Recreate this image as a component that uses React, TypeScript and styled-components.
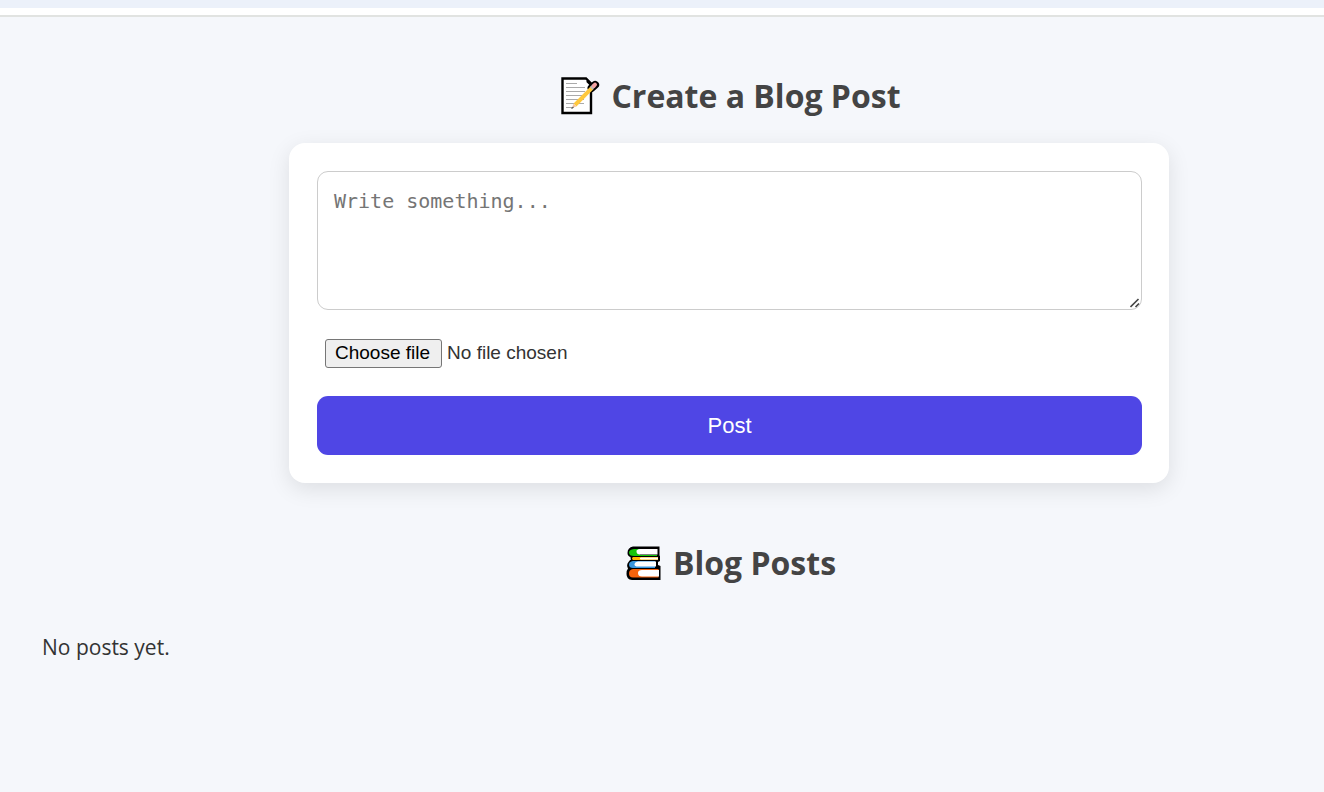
import React, { useState } from 'react';
import styled, { createGlobalStyle } from 'styled-components';

const GlobalStyle = createGlobalStyle`
  *, *::before, *::after { box-sizing: border-box; }
  body {
    margin: 0;
    background: #f5f7fb;
    color: #333;
    font-family: 'Open Sans', 'Noto Sans', sans-serif;
    font-size: 21px;
    line-height: 32px;
  }
`;

const TopBar = styled.header`
  height: 17px;
  background: #fff;
  border-top: 8px solid #ecf1fa;
  border-bottom: 2px solid #e1e3e1;
`;

const Page = styled.main`
  display: flex;
  flex-direction: column;
  padding-top: 55px;
`;

const Section = styled.section`
  display: flex;
  flex-direction: column;
  align-items: center;
  padding-left: 134px;
`;

const Heading = styled.h2`
  display: flex;
  align-items: center;
  gap: 11px;
  margin: 0;
  padding-left: 4px;
  color: #444;
  font-size: 32px;
  font-weight: 700;
  line-height: 48px;
`;

const Card = styled.form`
  display: flex;
  flex-direction: column;
  width: 880px;
  max-width: 100%;
  margin: 23px 0 56px;
  padding: 28px 27px 28px 28px;
  border-radius: 16px;
  background: #fff;
  box-shadow: 0 6px 22px rgba(0, 0, 0, 0.1);
`;

const TextField = styled.div`
  position: relative;
  display: flex;
`;

const PostText = styled.textarea`
  width: 100%;
  height: 139px;
  padding: 14px 16px;
  border: 1px solid #ccc;
  border-radius: 11px;
  color: #333;
  font-family: 'DejaVu Sans Mono', monospace;
  font-size: 20px;
  line-height: 30px;
  resize: vertical;

  &::placeholder { color: #757575; }
  &::-webkit-resizer { background: transparent; }
`;

const Grip = styled.svg`
  position: absolute;
  right: 2px;
  bottom: 2px;
  pointer-events: none;
`;

const FilePicker = styled.label`
  position: relative;
  display: flex;
  align-items: center;
  align-self: flex-start;
  gap: 5px;
  margin: 29px 8px 28px;
  font-family: 'Liberation Sans', sans-serif;
  font-size: 19px;
  line-height: 25px;
`;

const FileInput = styled.input`
  position: absolute;
  inset: 0;
  width: 100%;
  opacity: 0;
`;

const FileButton = styled.span`
  padding: 0 11px 2px 9px;
  border: 1px solid #767676;
  border-radius: 3px;
  background: #efefef;
  color: #000;
`;

const FileName = styled.span`
  padding-bottom: 2px;
`;

const SubmitButton = styled.button`
  height: 59px;
  border: 0;
  border-radius: 11px;
  background: #4f46e5;
  color: #fff;
  font-family: 'Liberation Sans', sans-serif;
  font-size: 22px;
  cursor: pointer;
`;

const EmptyMessage = styled.p`
  margin: 0;
  padding: 44px 42px;
`;

const MemoIcon = () => (
  <svg width="39" height="38" viewBox="0 0 39 38" aria-hidden="true">
    <path d="M1.5 1.5H25L30 6.5V36H1.5Z" fill="#fff" stroke="#000" strokeWidth="2.4" />
    <path d="M5 6.5h11M5 10.5h19M5 14.5h19M5 18.5h18M5 22.5h18M5 26.5h18M5 30.5h6" stroke="#aaa" fill="none" />
    <path d="M26 4L31 9" stroke="#000" strokeWidth="2.4" />
    <path d="M30.5 11L34.2 7.8" stroke="#000" strokeWidth="7.8" strokeLinecap="round" />
    <path d="M14 28L31 10.8" stroke="#ffc83d" strokeWidth="4" />
    <path d="M30.3 11.4L33 8.7" stroke="#bbb" strokeWidth="4" />
    <path d="M32.8 8.9L34 7.7" stroke="#f3a0a0" strokeWidth="4" strokeLinecap="round" />
    <path d="M12.6 26.6L15.4 29.4L11 31Z" fill="#f5c5a0" />
    <path d="M10.5 31.5L12.5 30" stroke="#555" strokeWidth="1.2" />
  </svg>
);

const BooksIcon = () => (
  <svg width="36" height="35" viewBox="0 0 36 35" aria-hidden="true">
    <path
      d="M7 .5H33.5V9.5L34 10V15L32 16V19L34.5 20V34H6Q.5 33.5.5 28Q.5 24 2 22.5Q0 19 2.5 16Q3.5 14 5 13.5Q4.5 12.5 4.5 11Q1.5 10 1.5 7Q1.5 1.5 7 .5Z"
      fill="#000"
    />
    <path d="M31 3H8Q3 3.5 3 6.5Q3 10 8 10H31V9H14V3Z" fill="#16c60c" />
    <path d="M31.5 3H14Q10 3.5 10.5 5.5Q10.5 8.5 14 8.5H31.5Z" fill="#fff" />
    <path d="M32 11H7Q5 12.5 7 14H32Z" fill="#ffb900" />
    <path d="M32 11.5H15Q12.5 12.3 15 13.5H32Z" fill="#fff" />
    <path d="M29 15H7Q3 15.5 3 18.5Q3 22 7 22H29Z" fill="#3a96dd" />
    <path d="M30 15.5H12Q8.5 16 8.5 18.5Q8.5 20.5 12 20.5H30Z" fill="#fff" />
    <path d="M32.5 23H7Q3 23.5 3 27.5Q3 31.5 7 31.5H32.5Z" fill="#f7630c" />
    <path d="M33 24H16Q12 24 12 27Q12 30.5 16 30.5H33Z" fill="#fff" />
  </svg>
);

export default function App() {
  const [text, setText] = useState('');
  const [fileName, setFileName] = useState('');

  return (
    <>
      <GlobalStyle />
      <TopBar />
      <Page>
        <Section>
          <Heading><MemoIcon />Create a Blog Post</Heading>
          <Card onSubmit={(event) => event.preventDefault()}>
            <TextField>
              <PostText
                aria-label="Post text"
                placeholder="Write something..."
                value={text}
                onChange={(event) => setText(event.target.value)}
              />
              <Grip width="10" height="10" viewBox="0 0 10 10" aria-hidden="true">
                <path d="M.5 9L8.5 1M5.5 9L9 5.5" stroke="#444" strokeWidth="1.6" />
              </Grip>
            </TextField>
            <FilePicker>
              <FileInput
                type="file"
                onChange={(event) => setFileName(event.target.files?.[0]?.name ?? '')}
              />
              <FileButton>Choose file</FileButton>
              <FileName>{fileName || 'No file chosen'}</FileName>
            </FilePicker>
            <SubmitButton type="submit">Post</SubmitButton>
          </Card>
        </Section>
        <Section>
          <Heading><BooksIcon />Blog Posts</Heading>
        </Section>
        <EmptyMessage>No posts yet.</EmptyMessage>
      </Page>
    </>
  );
}
